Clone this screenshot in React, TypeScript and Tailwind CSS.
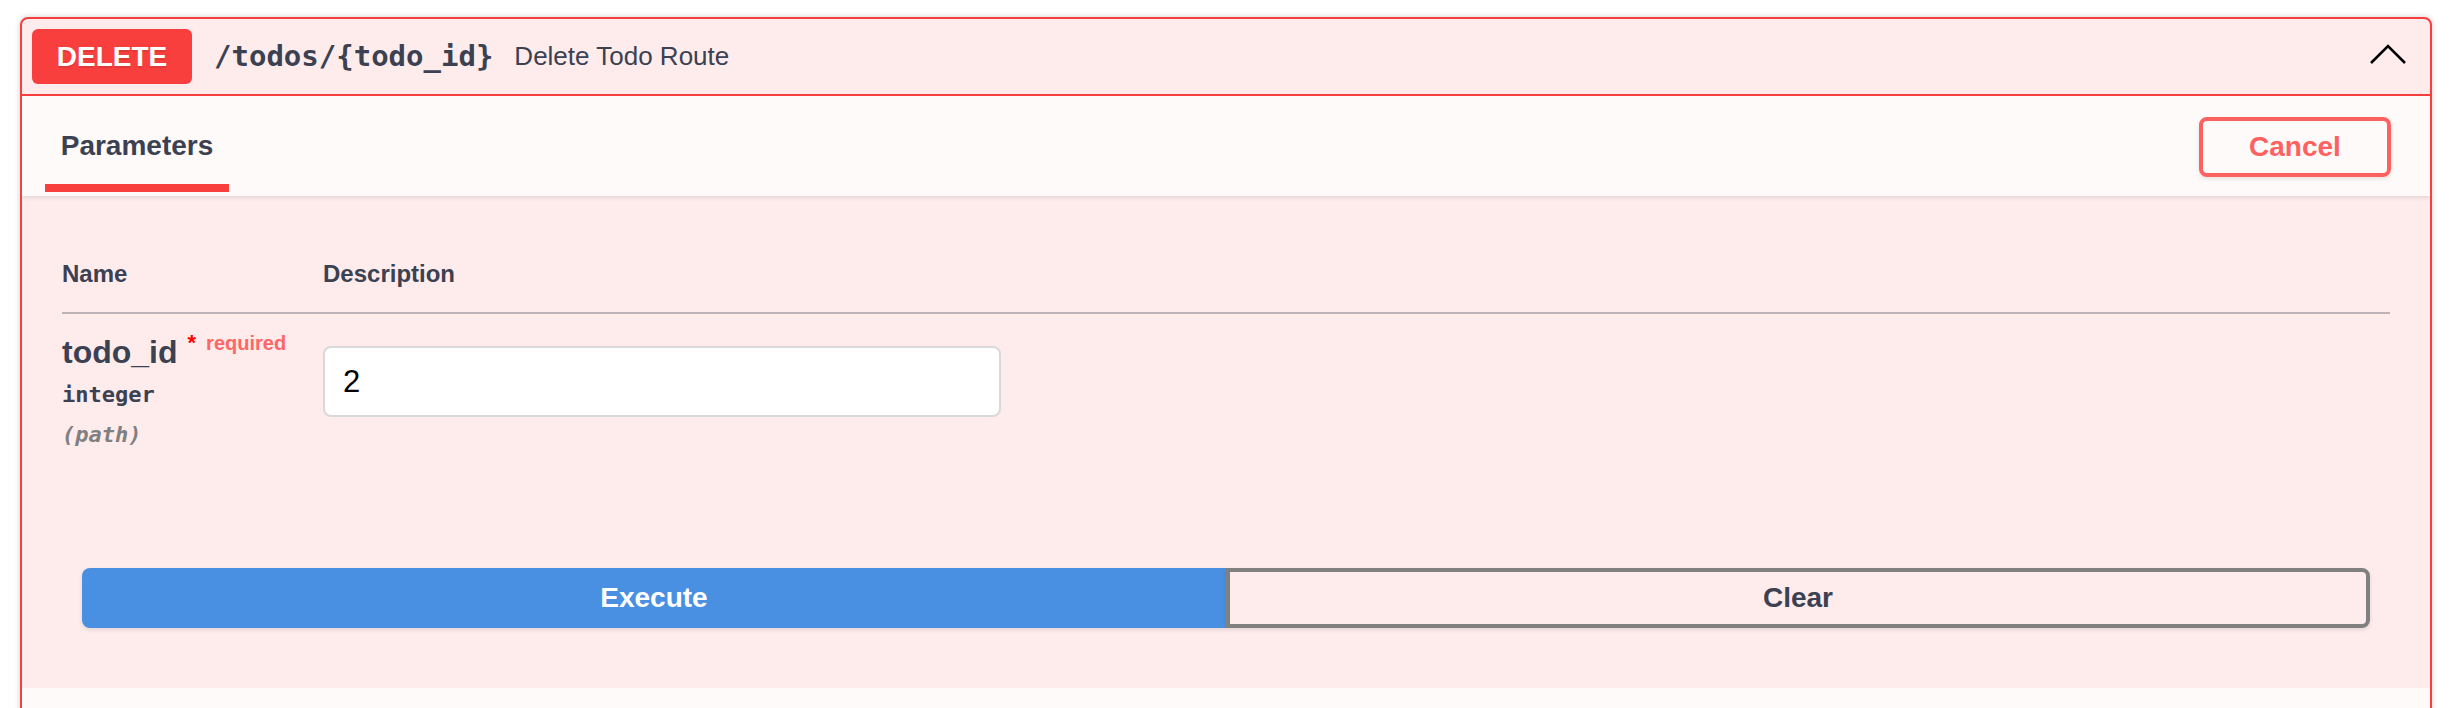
const sans = "font-['Liberation_Sans',Arial,sans-serif]";
const mono = "font-['DejaVu_Sans_Mono',monospace]";

function OpHeader() {
  return (
    <div className="flex h-[77px] items-center border-b-2 border-[#f93e3e] px-[10px]">
      <span
        className={`${sans} flex h-[55px] w-[160px] items-center justify-center rounded-[6px] bg-[#f93e3e] text-[28px] font-bold text-white [text-shadow:0_2px_0_rgba(0,0,0,0.1)]`}
      >
        DELETE
      </span>
      <span className={`${mono} ml-[22px] text-[29px] font-bold text-[#3b4151]`}>
        /todos/&#123;todo_id&#125;
      </span>
      <span className={`${sans} ml-[21px] text-[26px] text-[#3b4151]`}>
        Delete Todo Route
      </span>
      <svg
        className="mb-[5px] ml-auto mr-[13px]"
        width="38"
        height="22"
        viewBox="0 0 38 22"
        fill="none"
      >
        <polyline
          points="2,20 19,3 36,20"
          stroke="#000"
          strokeWidth="2.6"
        />
      </svg>
    </div>
  );
}

function TabBar() {
  return (
    <div className="relative flex h-[100px] items-stretch justify-between bg-[#fffafa] shadow-[0_2px_4px_rgba(0,0,0,0.1)]">
      <div className="ml-[23px] flex w-[184px] flex-col items-center pt-[36px]">
        <span className={`${sans} text-[28px] font-bold leading-[28px] text-[#3b4151]`}>
          Parameters
        </span>
        <div className="mt-[24px] h-[8px] w-[184px] bg-[#f93e3e]" />
      </div>
      <div className="flex items-center pr-[39px]">
        <button
          className={`${sans} mt-[2px] h-[60px] w-[192px] rounded-[8px] border-4 border-[#ff6060] bg-transparent text-[28px] font-bold text-[#ff6060] shadow-[0_2px_4px_rgba(0,0,0,0.1)]`}
        >
          Cancel
        </button>
      </div>
    </div>
  );
}

function ParamsTable() {
  return (
    <div className="px-[40px]">
      <div
        className={`${sans} flex pt-[66px] text-[24px] font-bold leading-[24px] text-[#3b4151]`}
      >
        <div className="w-[261px]">Name</div>
        <div>Description</div>
      </div>
      <div className="mt-[26px] h-[2px] bg-[#beb3b6]" />
      <div className="flex items-start">
        <div className="w-[261px] pt-[18px]">
          <div className={`${sans} h-[40px] leading-[40px] text-[#3b4151]`}>
            <span className="text-[32px] font-bold">todo_id</span>
            <span className="relative -top-[13px] pl-[10px] text-[22px] font-bold text-[#ff0000]">
              *
            </span>
            <span className="relative -top-[13px] pl-[10px] text-[20px] font-bold text-[#ff6666]">
              required
            </span>
          </div>
          <div className={`${mono} mt-[3px] text-[22px] font-bold leading-[40px] text-[#3b4151]`}>
            integer
          </div>
          <div className={`${mono} text-[22px] font-bold italic leading-[40px] text-[#808080]`}>
            (path)
          </div>
        </div>
        <div className="pt-[32px]">
          <input
            className={`${sans} h-[71px] w-[678px] rounded-[8px] border-2 border-[#d9d9d9] bg-white px-[18px] text-[31px] text-black outline-none`}
            defaultValue="2"
          />
        </div>
      </div>
    </div>
  );
}

function Actions() {
  return (
    <div className="flex px-[60px] pb-[60px] pt-[113px]">
      <button
        className={`${sans} h-[60px] w-1/2 rounded-l-[8px] bg-[#4990e2] text-[28px] font-bold text-white shadow-[0_2px_4px_rgba(0,0,0,0.1)]`}
      >
        Execute
      </button>
      <button
        className={`${sans} h-[60px] w-1/2 rounded-r-[8px] border-4 border-[#808080] bg-transparent text-[28px] font-bold text-[#3b4151] shadow-[0_2px_4px_rgba(0,0,0,0.1)]`}
      >
        Clear
      </button>
    </div>
  );
}

export default function App() {
  return (
    <div className="h-[708px] w-[2464px] overflow-hidden bg-white pt-[17px]">
      <div className="ml-[20px] w-[2412px] overflow-hidden rounded-[8px] border-2 border-[#f93e3e] bg-[#feecec] shadow-[0_0_6px_rgba(0,0,0,0.19)]">
        <OpHeader />
        <TabBar />
        <ParamsTable />
        <Actions />
        <div className="h-[80px] bg-[#fffafa]" />
      </div>
    </div>
  );
}
